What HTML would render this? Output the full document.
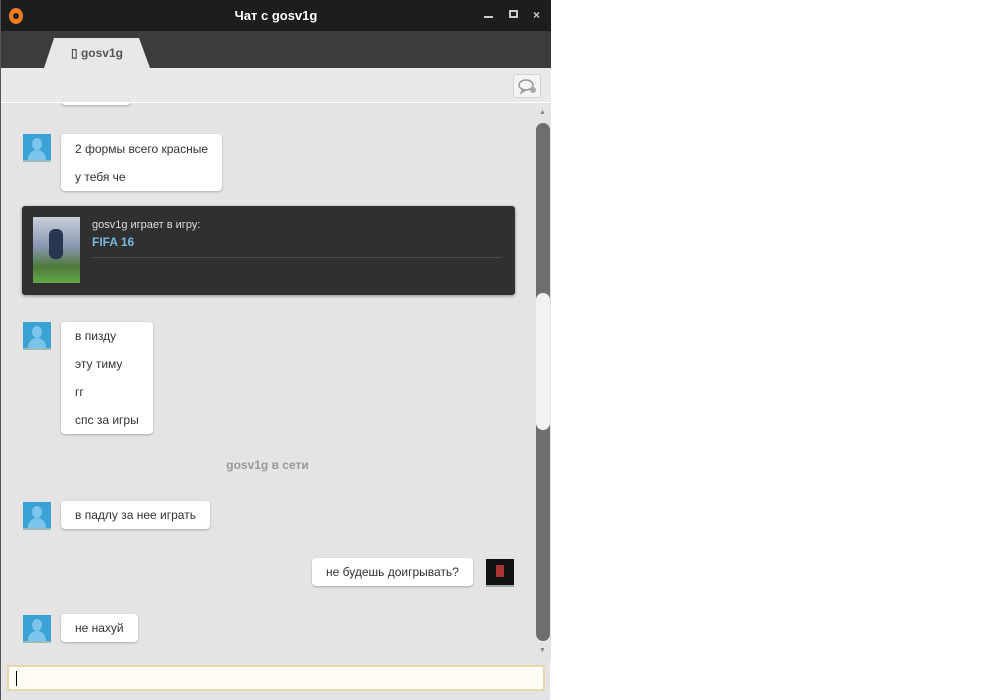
<!DOCTYPE html>
<html><head><meta charset="utf-8"><style>
*{margin:0;padding:0;box-sizing:border-box}
body{width:1000px;height:700px;background:#fff;font-family:"Liberation Sans",Arial,sans-serif;position:relative;overflow:hidden}
.win{position:absolute;left:0;top:0;width:550px;height:700px;background:#e4e4e4;border-left:1px solid #555}
.title{position:absolute;left:0;top:0;width:550px;height:31px;background:#1d1d1d;color:#fff;font-size:13px;font-weight:bold;text-align:center;line-height:31px;z-index:3}
.tabs{position:absolute;left:0;top:31px;width:550px;height:37px;background:#3c3c3c;z-index:3}
.tab{position:absolute;left:43px;top:7px;width:106px;height:30px;background:#e8e8e8;clip-path:polygon(10px 0,95px 0,106px 30px,0 30px);border-radius:4px 4px 0 0;color:#555;font-size:12px;font-weight:bold;text-align:center;line-height:30px}
.tool{position:absolute;left:0;top:68px;width:550px;height:35px;background:#e9e9e9;border-bottom:1px solid #fff;z-index:3}
.tbtn{position:absolute;right:10px;top:6px;width:28px;height:24px;background:#f4f4f4;border:1px solid #d4d4d4;border-radius:3px}
.av{position:absolute;left:22px;width:28px;height:28px;background:#3ba2d6;border-bottom:2px solid #9bb}
.av:before{content:"";position:absolute;left:9px;top:4px;width:10px;height:12px;border-radius:50%;background:#7cc5ea}
.av:after{content:"";position:absolute;left:5px;top:16px;width:18px;height:10px;border-radius:9px 9px 0 0;background:#7cc5ea}
.b{position:absolute;left:60px;background:#fff;border-radius:4px;box-shadow:0 1px 2px rgba(0,0,0,.25);font-size:12px;color:#333;padding:0 14px}
.b div{height:28px;line-height:28px}
.game{position:absolute;left:21px;top:206px;width:493px;height:89px;background:#303030;border-radius:3px;box-shadow:0 1px 3px rgba(0,0,0,.4)}
.sb{position:absolute;left:533px;top:103px;width:17px;height:557px;background:#e4e4e4}
.track{position:absolute;left:2px;top:20px;width:14px;height:518px;background:#6e6e6e;border-radius:7px}
.thumb{position:absolute;left:2px;top:190px;width:14px;height:137px;background:#f2f2f2;border-radius:7px}
.inp{position:absolute;left:6px;top:665px;width:538px;height:26px;border:2px solid #e6d7ae;background:#fffdf6}
</style></head><body>
<div class="win">
<div class="title">Чат с gosv1g
<div style="position:absolute;left:8px;top:8px;width:14px;height:16px;border-radius:50%;background:#f47a1f"><div style="position:absolute;left:4px;top:5px;width:6px;height:6px;border-radius:50%;background:#1d1d1d"></div></div>
<div style="position:absolute;left:483px;top:16px;width:9px;height:2px;background:#ccc"></div>
<div style="position:absolute;left:508px;top:10px;width:9px;height:8px;border:2px solid #ccc"></div>
<div style="position:absolute;left:532px;top:0;color:#ccc;font-size:12px">×</div>
</div>
<div class="tabs"><div class="tab">▯ gosv1g</div></div>
<div class="tool"><div class="tbtn"><svg width="26" height="22" viewBox="0 0 26 22"><ellipse cx="12" cy="10" rx="7" ry="5" fill="none" stroke="#999" stroke-width="1.5"/><path d="M9 14 L7 18 L12 15" fill="none" stroke="#999" stroke-width="1.3"/><circle cx="19" cy="15" r="3" fill="#aaa"/></svg></div></div>
<div class="b" style="top:85px;width:70px;height:20px"></div>
<div class="av" style="top:134px"></div>
<div class="b" style="top:134px;padding-top:1px"><div>2 формы всего красные</div><div>у тебя че</div></div>
<div class="game">
<div style="position:absolute;left:11px;top:11px;width:47px;height:66px;background:linear-gradient(#c9d0dc,#8896b0 45%,#4d7a3a 75%,#62a84a)"><div style="position:absolute;left:16px;top:12px;width:14px;height:30px;background:#2a3550;border-radius:6px"></div></div>
<div style="position:absolute;left:70px;top:13px;color:#ddd;font-size:11px">gosv1g играет в игру:</div>
<div style="position:absolute;left:70px;top:29px;color:#7ab8e0;font-size:12px;font-weight:bold">FIFA 16</div>
<div style="position:absolute;left:70px;top:51px;width:409px;border-top:1px dotted #666"></div>
</div>
<div class="av" style="top:322px"></div>
<div class="b" style="top:322px"><div>в пизду</div><div>эту тиму</div><div>гг</div><div>спс за игры</div></div>
<div style="position:absolute;left:0;width:533px;top:458px;text-align:center;font-size:12px;font-weight:bold;color:#999">gosv1g в сети</div>
<div class="av" style="top:502px"></div>
<div class="b" style="top:501px"><div>в падлу за нее играть</div></div>
<div class="b" style="left:311px;top:558px"><div>не будешь доигрывать?</div></div>
<div style="position:absolute;left:485px;top:559px;width:28px;height:28px;background:#111;border-bottom:2px solid #9aa"><div style="position:absolute;left:10px;top:6px;width:8px;height:12px;background:#a33"></div></div>
<div class="av" style="top:615px"></div>
<div class="b" style="top:614px"><div>не нахуй</div></div>
<div class="sb"><div style="position:absolute;left:5px;top:6px;font-size:7px;color:#888">▲</div><div class="track"></div><div class="thumb"></div><div style="position:absolute;left:5px;top:544px;font-size:7px;color:#888">▼</div></div>
<div class="inp"><div style="position:absolute;left:7px;top:4px;width:1px;height:15px;background:#000"></div></div>
</div>
</body></html>
